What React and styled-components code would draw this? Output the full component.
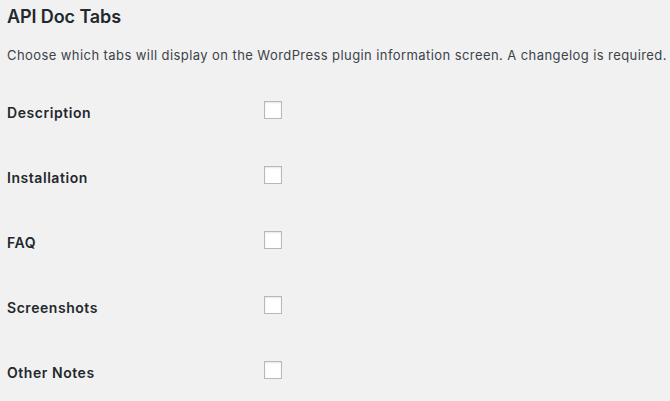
import React from "react";
import styled, { createGlobalStyle } from "styled-components";

const Global = createGlobalStyle`
  html, body { margin: 0; padding: 0; background: #f1f1f1; }
  body { font-family: Inter, "Noto Sans", sans-serif; color: #3c434a; }
`;

const Page = styled.div`
  box-sizing: border-box;
  height: 100vh;
  overflow: hidden;
  padding: 6px 7px 0;
`;

const Title = styled.h2`
  margin: 0;
  font-size: 18px;
  line-height: 22px;
  font-weight: 600;
  letter-spacing: -0.1px;
  color: #23282d;
`;

const Intro = styled.p`
  margin: 17px 0 0;
  font-size: 13px;
  line-height: 20px;
  letter-spacing: 0.42px;
  color: #3c434a;
  white-space: nowrap;
`;

const Table = styled.div`
  margin-top: 36px;
  display: grid;
  grid-template-columns: 257px 1fr;
  grid-auto-rows: 65px;
`;

const Label = styled.div`
  font-size: 14px;
  font-weight: 600;
  letter-spacing: 0.55px;
  color: #23282d;
  line-height: 20px;
  padding-top: 2px;
`;

const Cell = styled.div``;

const Check = styled.input.attrs({ type: "checkbox" })`
  appearance: none;
  margin: 0;
  display: block;
  width: 18px;
  height: 18px;
  box-sizing: border-box;
  border: 1px solid #b4b9be;
  background: #fff;
  border-radius: 0;
  box-shadow: inset 0 1px 2px rgba(0, 0, 0, 0.1);
`;

const tabs = ["Description", "Installation", "FAQ", "Screenshots", "Other Notes"];

export default function App() {
  return (
    <Page>
      <Global />
      <Title>API Doc Tabs</Title>
      <Intro>
        Choose which tabs will display on the WordPress plugin information screen. A changelog is required.
      </Intro>
      <Table>
        {tabs.map((t) => (
          <React.Fragment key={t}>
            <Label>{t}</Label>
            <Cell>
              <Check aria-label={t} />
            </Cell>
          </React.Fragment>
        ))}
      </Table>
    </Page>
  );
}
